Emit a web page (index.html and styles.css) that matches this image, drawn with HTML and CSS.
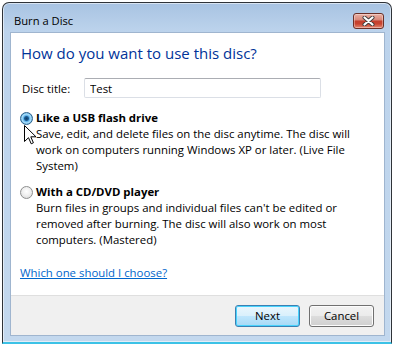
FILE: index.html
```html
<!DOCTYPE html>
<html lang="en">
<head>
  <meta charset="UTF-8">
  <title>Burn a Disc</title>
  <link rel="stylesheet" href="styles.css">
</head>
<body>
  <div class="window">
    <div class="titlebar">
      <span class="caption">Burn a Disc</span>
      <button class="close-button" aria-label="Close">
        <svg width="13" height="10" viewBox="0 0 13 10">
          <path d="M2.5 1.5 L10.5 8.5 M10.5 1.5 L2.5 8.5" stroke="#3b3b3b" stroke-width="4" stroke-linecap="round"/>
          <path d="M2.5 1.5 L10.5 8.5 M10.5 1.5 L2.5 8.5" stroke="#ffffff" stroke-width="2.2" stroke-linecap="round"/>
        </svg>
      </button>
    </div>

    <div class="client">
      <div class="content">
        <div class="instruction">How do you want to use this disc?</div>

        <div class="field">
          <label class="field-label" for="discTitle">Disc title:</label>
          <input id="discTitle" class="textbox" type="text" value="Test">
        </div>

        <div class="option">
          <span class="radio checked"></span>
          <div class="option-text">
            <div class="option-title">Like a USB flash drive</div>
            <div class="option-desc">Save, edit, and delete files on the disc anytime. The disc will work on computers running Windows XP or later. (Live File System)</div>
          </div>
        </div>

        <div class="option">
          <span class="radio"></span>
          <div class="option-text">
            <div class="option-title">With a CD/DVD player</div>
            <div class="option-desc">Burn files in groups and individual files can't be edited or removed after burning. The disc will also work on most computers. (Mastered)</div>
          </div>
        </div>

        <a class="help-link" href="#">Which one should I choose?</a>
      </div>

      <div class="footer">
        <button class="btn default">Next</button>
        <button class="btn">Cancel</button>
      </div>
    </div>

    <svg class="cursor" width="13" height="20" viewBox="0 0 13 20">
      <path d="M0.5 0.5 L0.5 16.5 L4.5 12.7 L7.2 18.8 L9.4 17.8 L6.8 11.8 L12 11.8 Z" fill="#ffffff" stroke="#000000" stroke-width="1" stroke-linejoin="miter"/>
    </svg>
  </div>
</body>
</html>
```

FILE: styles.css
```css
body {
  margin: 0;
  background-color: #ffffff;
  font-family: "Open Sans", "Noto Sans", sans-serif;
  font-size: 11.4px;
  color: #000000;
}

.window {
  position: relative;
  box-sizing: border-box;
  width: 390px;
  height: 342px;
  margin: 2px 0 0 2px;
  display: flex;
  flex-direction: column;
  border: 1px solid #2f3338;
  border-bottom: 2px solid #3cc2e6;
  border-radius: 7px 7px 0 0;
  background: linear-gradient(#a8c3e2 0, #bcd3ec 28px, #c3d8ee 100%);
  box-shadow: inset 0 0 0 1px rgba(255, 255, 255, 0.55);
}

.titlebar {
  box-sizing: border-box;
  height: 29px;
  padding: 6px 7px 0 11px;
  display: flex;
  align-items: center;
  justify-content: space-between;
}

.caption {
  font-size: 11.2px;
  color: #000000;
}

.close-button {
  box-sizing: border-box;
  width: 31px;
  height: 16px;
  padding: 0;
  display: flex;
  align-items: center;
  justify-content: center;
  border: 1px solid #6b3028;
  border-radius: 3px;
  background: linear-gradient(#eab0a4 0%, #d98a7c 40%, #c4402e 52%, #c8432f 70%, #e48a74 100%);
  box-shadow: inset 0 0 0 1px rgba(255, 255, 255, 0.35);
}

.client {
  flex: 1;
  box-sizing: border-box;
  margin: 0 6px 6px 7px;
  display: flex;
  flex-direction: column;
  background-color: #ffffff;
  border: 1px solid #9fb5cf;
}

.content {
  flex: 1;
  padding: 0 10px 0 10px;
}

.instruction {
  margin-top: 10px;
  font-size: 15px;
  line-height: 20px;
  color: #003399;
}

.field {
  margin-top: 15px;
  display: flex;
  align-items: center;
}

.field-label {
  width: 62px;
  padding-left: 1px;
}

.textbox {
  box-sizing: border-box;
  width: 237px;
  height: 20px;
  padding: 0 5px;
  font-family: inherit;
  font-size: 11.4px;
  color: #000000;
  border: 1px solid #dbdfe6;
  border-top-color: #abadb3;
  border-radius: 2px;
  outline: none;
}

.option {
  display: flex;
  line-height: 16px;
}

.field + .option {
  margin-top: 12px;
}

.option + .option {
  margin-top: 10px;
}

.radio {
  box-sizing: border-box;
  flex: none;
  width: 13px;
  height: 13px;
  margin: 2px 3px 0 -1px;
  border-radius: 50%;
  border: 1px solid #8e8f8f;
  background: radial-gradient(circle at 50% 40%, #ffffff 0, #f0f0f0 45%, #d4d4d4 100%);
}

.radio.checked {
  border-color: #2c628b;
  background: radial-gradient(circle, #0d3e66 0, #1c5b92 2px, #5fb3ea 3px, #aee0fb 4.5px, #5aa4d6 6px);
}

.option-text {
  flex: 1;
}

.option-title {
  font-weight: bold;
}

.option-desc {
  width: 330px;
}

.help-link {
  display: inline-block;
  margin-top: 17px;
  line-height: 16px;
  margin-left: -1px;
  color: #0066cc;
  text-decoration: underline;
}

.footer {
  box-sizing: border-box;
  height: 40px;
  padding-right: 10px;
  display: flex;
  align-items: center;
  justify-content: flex-end;
  gap: 9px;
  background-color: #f0f0f0;
  border-top: 1px solid #dfdfdf;
}

.btn {
  box-sizing: border-box;
  width: 65px;
  height: 22px;
  padding: 0;
  font-family: inherit;
  font-size: 11.4px;
  color: #000000;
  border: 1px solid #707070;
  border-radius: 3px;
  background: linear-gradient(#f2f2f2 0%, #ebebeb 50%, #dddddd 51%, #cfcfcf 100%);
  box-shadow: inset 0 0 0 1px #fcfcfc;
}

.btn.default {
  border-color: #3c7fb1;
  background: linear-gradient(#eaf6fd 0%, #d9f0fc 50%, #bee6fd 51%, #a7d9f5 100%);
  box-shadow: inset 0 0 0 1px #48d3fd;
}

.cursor {
  position: absolute;
  left: 21px;
  top: 122px;
}
```
